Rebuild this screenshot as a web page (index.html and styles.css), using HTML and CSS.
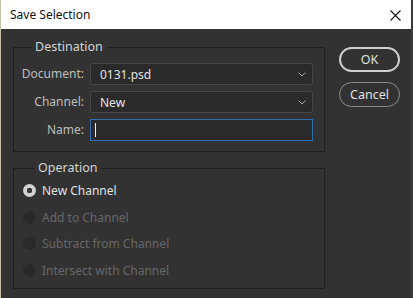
FILE: index.html
```html
<!DOCTYPE html>
<html lang="en">
  <head>
    <meta charset="UTF-8" />
    <meta name="viewport" content="width=device-width, initial-scale=1.0" />
    <title>Save Selection</title>
    <link rel="stylesheet" href="styles.css">
  </head>
  <body>
    <div class="window">
      <div class="titlebar">
        <span class="title">Save Selection</span>
        <svg class="close" width="11" height="11" viewBox="0 0 11 11">
          <path d="M0.5 0.5 L10.5 10.5 M10.5 0.5 L0.5 10.5" stroke="#111" stroke-width="1.1" fill="none" />
        </svg>
      </div>

      <div class="content">
        <div class="groups">
          <fieldset class="group destination">
            <legend>Destination</legend>
            <div class="form-grid">
              <label for="doc">Document:</label>
              <div class="select" id="doc">
                <span>0131.psd</span>
                <svg class="chevron" width="8" height="5" viewBox="0 0 8 5">
                  <path d="M0.5 0.5 L4 4 L7.5 0.5" stroke="#a8a8a8" stroke-width="1" fill="none" />
                </svg>
              </div>

              <label for="channel">Channel:</label>
              <div class="select" id="channel">
                <span>New</span>
                <svg class="chevron" width="8" height="5" viewBox="0 0 8 5">
                  <path d="M0.5 0.5 L4 4 L7.5 0.5" stroke="#a8a8a8" stroke-width="1" fill="none" />
                </svg>
              </div>

              <label for="name">Name:</label>
              <div class="text-input" id="name"><span class="caret"></span></div>
            </div>
          </fieldset>

          <fieldset class="group operation">
            <legend>Operation</legend>
            <div class="radio checked"><span class="dot"></span>New Channel</div>
            <div class="radio disabled"><span class="dot"></span>Add to Channel</div>
            <div class="radio disabled"><span class="dot"></span>Subtract from Channel</div>
            <div class="radio disabled"><span class="dot"></span>Intersect with Channel</div>
          </fieldset>
        </div>

        <div class="buttons">
          <button class="btn primary">OK</button>
          <button class="btn">Cancel</button>
        </div>
      </div>
    </div>
  </body>
</html>
```

FILE: styles.css
```css
body {
  margin: 0;
  font-family: "Segoe UI", "Noto Sans", sans-serif;
  font-size: 12px;
  background-color: #323232;
}
.window {
  width: 410px;
  height: 298px;
  border-left: 1px solid #c4c2a4;
  border-right: 2px solid #3b3b3b;
  background-color: #323232;
  overflow: hidden;
}
.titlebar {
  height: 29px;
  background-color: white;
  display: flex;
  align-items: center;
  justify-content: space-between;
  padding: 0 10px 0 9px;
  color: #111;
}
.title {
  font-size: 12px;
}
.close {
  margin-top: 1px;
}
.content {
  display: flex;
  padding: 10px 0 0 12px;
}
.groups {
  width: 312px;
}
.group {
  margin: 0;
  border: 1px solid #1f1f1f;
  padding: 0 11px 10px 6px;
  min-width: 0;
}
.group legend {
  color: #d4d4d4;
  font-size: 12.5px;
  padding: 0 4px;
  margin-left: 11px;
  line-height: 16px;
}
.form-grid {
  display: grid;
  grid-template-columns: 64px 223px;
  column-gap: 6px;
  row-gap: 6px;
  padding-top: 8px;
}
.form-grid label {
  color: #bdbdbd;
  text-align: right;
  line-height: 22px;
}
.select,
.text-input {
  height: 20px;
  border: 1px solid #464646;
  border-radius: 3px;
  background-color: #2a2a2a;
  color: #e2e2e2;
  display: flex;
  align-items: center;
  justify-content: space-between;
  padding: 0 6px 0 9px;
}
.text-input {
  border-color: #2f6db0;
  border-radius: 0;
  padding-left: 4px;
}
.caret {
  width: 1px;
  height: 14px;
  background-color: #f0f0f0;
}
.chevron {
  margin-top: 1px;
}
.operation {
  margin-top: 8px;
  padding: 1px 10px 4px 9px;
}
.radio {
  display: flex;
  align-items: center;
  gap: 6px;
  height: 26.7px;
  color: #e0e0e0;
}
.radio .dot {
  width: 13px;
  height: 13px;
  border-radius: 50%;
  box-sizing: border-box;
}
.radio.checked .dot {
  background: radial-gradient(circle, #3a3a3a 0 2.6px, #d2d2d2 3px);
}
.radio.disabled {
  color: #676767;
}
.radio.disabled .dot {
  background-color: #292929;
}
.buttons {
  display: flex;
  flex-direction: column;
  gap: 10px;
  margin-left: 14px;
  padding-top: 8px;
}
.btn {
  width: 61px;
  height: 25px;
  border-radius: 13px;
  border: 1px solid #8c8c8c;
  background-color: transparent;
  color: #e0e0e0;
  font-family: inherit;
  font-size: 12.5px;
  padding: 0;
}
.btn.primary {
  border: 2px solid #cfcfcf;
}
```
